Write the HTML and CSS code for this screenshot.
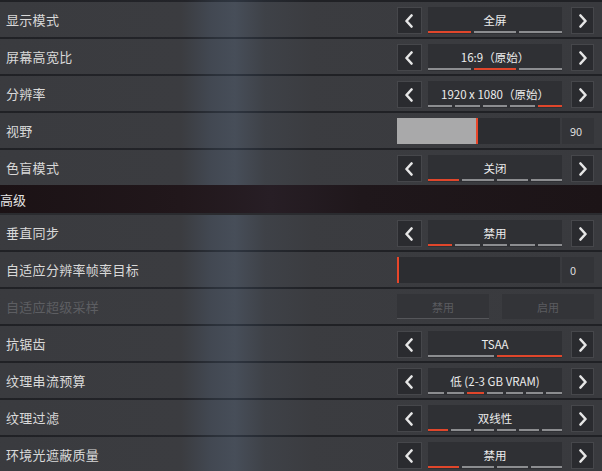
FILE: index.html
```html
<!DOCTYPE html>
<html lang="zh-CN">
<head>
<meta charset="utf-8">
<title>视频设置</title>
<link rel="stylesheet" href="styles.css">
</head>
<body>
<div class="page">
  <div class="row">
    <div class="label">显示模式</div>
    <div class="selector">
      <div class="arrow"><svg viewBox="0 0 10 14" class="chev"><path d="M7.5 1.5 L2.5 7 L7.5 12.5"/></svg></div>
      <div class="box"><div class="val">全屏</div><div class="segs"><i class="on"></i><i></i><i></i></div></div>
      <div class="arrow right"><svg viewBox="0 0 10 14" class="chev"><path d="M2.5 1.5 L7.5 7 L2.5 12.5"/></svg></div>
    </div>
  </div>
  <div class="row">
    <div class="label">屏幕高宽比</div>
    <div class="selector">
      <div class="arrow"><svg viewBox="0 0 10 14" class="chev"><path d="M7.5 1.5 L2.5 7 L7.5 12.5"/></svg></div>
      <div class="box"><div class="val">16:9（原始）</div><div class="segs"><i></i><i class="on"></i><i></i></div></div>
      <div class="arrow right"><svg viewBox="0 0 10 14" class="chev"><path d="M2.5 1.5 L7.5 7 L2.5 12.5"/></svg></div>
    </div>
  </div>
  <div class="row">
    <div class="label">分辨率</div>
    <div class="selector">
      <div class="arrow"><svg viewBox="0 0 10 14" class="chev"><path d="M7.5 1.5 L2.5 7 L7.5 12.5"/></svg></div>
      <div class="box"><div class="val">1920 x 1080（原始）</div><div class="segs"><i></i><i></i><i></i><i></i><i class="on"></i></div></div>
      <div class="arrow right"><svg viewBox="0 0 10 14" class="chev"><path d="M2.5 1.5 L7.5 7 L2.5 12.5"/></svg></div>
    </div>
  </div>
  <div class="row">
    <div class="label">视野</div>
    <div class="slider">
      <div class="track"><div class="fill" style="width:79px"></div><div class="knob"></div></div>
      <div class="num">90</div>
    </div>
  </div>
  <div class="row">
    <div class="label">色盲模式</div>
    <div class="selector">
      <div class="arrow"><svg viewBox="0 0 10 14" class="chev"><path d="M7.5 1.5 L2.5 7 L7.5 12.5"/></svg></div>
      <div class="box"><div class="val">关闭</div><div class="segs"><i class="on"></i><i></i><i></i><i></i></div></div>
      <div class="arrow right"><svg viewBox="0 0 10 14" class="chev"><path d="M2.5 1.5 L7.5 7 L2.5 12.5"/></svg></div>
    </div>
  </div>
  <div class="header">高级</div>
  <div class="row">
    <div class="label">垂直同步</div>
    <div class="selector">
      <div class="arrow"><svg viewBox="0 0 10 14" class="chev"><path d="M7.5 1.5 L2.5 7 L7.5 12.5"/></svg></div>
      <div class="box"><div class="val">禁用</div><div class="segs"><i class="on"></i><i></i><i></i><i></i><i></i></div></div>
      <div class="arrow right"><svg viewBox="0 0 10 14" class="chev"><path d="M2.5 1.5 L7.5 7 L2.5 12.5"/></svg></div>
    </div>
  </div>
  <div class="row">
    <div class="label">自适应分辨率帧率目标</div>
    <div class="slider">
      <div class="track"><div class="fill" style="width:0px"></div><div class="knob"></div></div>
      <div class="num">0</div>
    </div>
  </div>
  <div class="row disabled">
    <div class="label">自适应超级采样</div>
    <div class="toggle">
      <div class="tbtn sel">禁用</div>
      <div class="tbtn">启用</div>
    </div>
  </div>
  <div class="row">
    <div class="label">抗锯齿</div>
    <div class="selector">
      <div class="arrow"><svg viewBox="0 0 10 14" class="chev"><path d="M7.5 1.5 L2.5 7 L7.5 12.5"/></svg></div>
      <div class="box"><div class="val">TSAA</div><div class="segs"><i></i><i class="on"></i></div></div>
      <div class="arrow right"><svg viewBox="0 0 10 14" class="chev"><path d="M2.5 1.5 L7.5 7 L2.5 12.5"/></svg></div>
    </div>
  </div>
  <div class="row">
    <div class="label">纹理串流预算</div>
    <div class="selector">
      <div class="arrow"><svg viewBox="0 0 10 14" class="chev"><path d="M7.5 1.5 L2.5 7 L7.5 12.5"/></svg></div>
      <div class="box"><div class="val">低 (2-3 GB VRAM)</div><div class="segs"><i></i><i></i><i class="on"></i><i></i><i></i><i></i><i></i></div></div>
      <div class="arrow right"><svg viewBox="0 0 10 14" class="chev"><path d="M2.5 1.5 L7.5 7 L2.5 12.5"/></svg></div>
    </div>
  </div>
  <div class="row">
    <div class="label">纹理过滤</div>
    <div class="selector">
      <div class="arrow"><svg viewBox="0 0 10 14" class="chev"><path d="M7.5 1.5 L2.5 7 L7.5 12.5"/></svg></div>
      <div class="box"><div class="val">双线性</div><div class="segs"><i class="on"></i><i></i><i></i><i></i><i></i><i></i></div></div>
      <div class="arrow right"><svg viewBox="0 0 10 14" class="chev"><path d="M2.5 1.5 L7.5 7 L2.5 12.5"/></svg></div>
    </div>
  </div>
  <div class="row">
    <div class="label">环境光遮蔽质量</div>
    <div class="selector">
      <div class="arrow"><svg viewBox="0 0 10 14" class="chev"><path d="M7.5 1.5 L2.5 7 L7.5 12.5"/></svg></div>
      <div class="box"><div class="val">禁用</div><div class="segs"><i class="on"></i><i></i><i></i><i></i></div></div>
      <div class="arrow right"><svg viewBox="0 0 10 14" class="chev"><path d="M2.5 1.5 L7.5 7 L2.5 12.5"/></svg></div>
    </div>
  </div>
</div>
</body>
</html>
```

FILE: styles.css
```css
html, body {
  margin: 0;
  padding: 0;
}
body {
  width: 602px;
  height: 471px;
  overflow: hidden;
  background: #202125;
  font-family: "Noto Sans CJK SC", "Noto Sans", "Liberation Sans", sans-serif;
}
.page {
  padding-top: 2px;
  display: flex;
  flex-direction: column;
  background: linear-gradient(90deg, #202125 0%, #232429 31%, #2c323b 36%, #2e3540 39%, #262a31 44%, #202125 52%, #202125 100%);
}
.row {
  height: 35px;
  margin-bottom: 2px;
  display: flex;
  align-items: center;
  padding-right: 8px;
  background: linear-gradient(90deg, rgba(59,60,64,0.96) 0%, rgba(60,61,65,0.96) 30%, rgba(68,74,84,0.93) 35%, rgba(73,80,91,0.92) 39%, rgba(64,67,73,0.94) 44%, rgba(60,61,65,0.96) 52%, rgba(58,59,63,0.96) 100%);
}
.label {
  flex: 1;
  padding-left: 6px;
  font-size: 13px;
  color: #d9d9d9;
  letter-spacing: 0.3px;
}
.disabled .label {
  color: #5d5e62;
}
.header {
  height: 28px;
  margin-top: -2px;
  display: flex;
  align-items: center;
  font-size: 13px;
  color: #e4e4e4;
  background: linear-gradient(90deg, #1b1215 0%, #21171b 30%, #271e25 45%, #1f171b 60%, #1c1417 100%);
  border-bottom: 2px solid #2a2b2f;
}
.selector {
  width: 197px;
  height: 27px;
  display: flex;
  align-self: flex-start;
  margin-top: 5px;
}
.arrow {
  width: 22px;
  height: 25px;
  background: #2a2b2f;
  border: 1px solid #46474b;
  display: flex;
  align-items: center;
  justify-content: center;
}
.arrow:first-child {
  width: 23px;
  margin-right: 6px;
}
.arrow.right {
  width: 21px;
  margin-left: 9px;
}
.chev {
  width: 10px;
  height: 14px;
  fill: none;
  stroke: #e6e6e6;
  stroke-width: 2.6;
  stroke-linecap: round;
  stroke-linejoin: round;
}
.box {
  width: 135px;
  height: 27px;
  background: #2f3034;
  display: flex;
  flex-direction: column;
}
.val {
  flex: 1;
  display: flex;
  align-items: center;
  justify-content: center;
  font-size: 11.5px;
  color: #ececec;
  padding-top: 1px;
}
.segs {
  display: flex;
  gap: 3px;
  height: 2px;
  margin-bottom: 1px;
}
.segs i {
  flex: 1;
  background: #8c8d90;
}
.segs i.on {
  background: #e0462b;
}
.slider {
  width: 197px;
  height: 26px;
  display: flex;
  gap: 2px;
}
.track {
  width: 163px;
  background: #2c2d31;
  display: flex;
}
.fill {
  background: #a9a9aa;
}
.knob {
  width: 2px;
  background: #e8462a;
}
.num {
  flex: 1;
  background: #333438;
  display: flex;
  align-items: center;
  padding-left: 8px;
  font-size: 11px;
  color: #dedede;
}
.toggle {
  width: 197px;
  height: 25px;
  display: flex;
  gap: 13px;
}
.tbtn {
  flex: 1;
  background: #333438;
  display: flex;
  align-items: center;
  justify-content: center;
  font-size: 11px;
  color: #5b5c60;
}
.tbtn.sel {
  box-shadow: inset 0 -1px 0 #55565a;
}
```
